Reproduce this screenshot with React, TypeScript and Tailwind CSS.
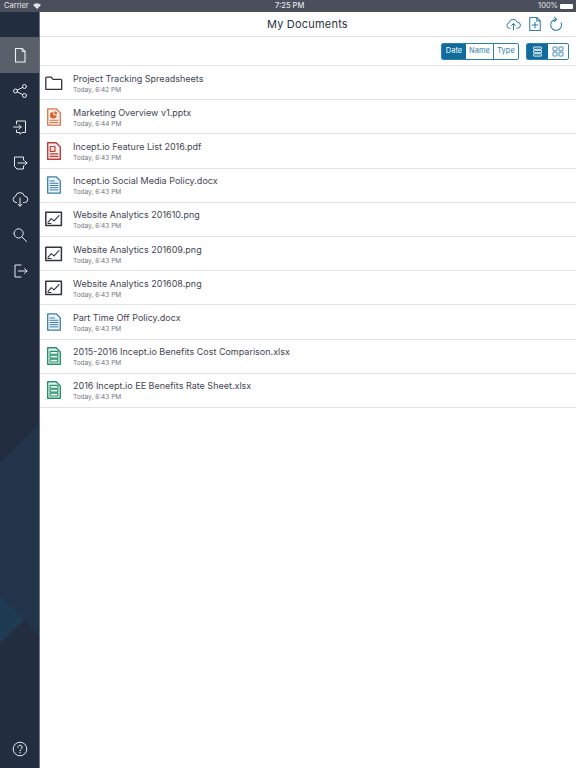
import React from "react";

const S = { fill: "none", stroke: "currentColor", strokeWidth: 1, strokeLinejoin: "round" as const, strokeLinecap: "round" as const };

function Ico({ children, w = 18, h = 18, vb = "0 0 18 18", className = "" }: { children: React.ReactNode; w?: number; h?: number; vb?: string; className?: string }) {
  return (
    <svg width={w} height={h} viewBox={vb} className={className} {...S}>
      {children}
    </svg>
  );
}

const FolderIcon = () => (
  <Ico className="text-[#30343d]">
    <path d="M.8 15.300V4.200a1 1 0 0 1 1-1h4.500l1.700 2.100h7.700a1 1 0 0 1 1 1v9h-15.900z" strokeWidth={1.300} />
  </Ico>
);
const PptIcon = () => (
  <Ico className="text-[#de7448]">
    <path d="M2.700 .8h8.500l4.100 4.100V17.200H2.700z" strokeWidth={1.300} fill="#fbeee8" />
    <path d="M8.300 4a3.300 3.300 0 1 0 3.300 3.300H8.300z" fill="#dd5f2c" stroke="none" />
    <path d="M9.400 3.300a2.800 2.800 0 0 1 2.800 2.900H9.400z" fill="#dd5f2c" stroke="none" />
    <path d="M5 12.300h8M5 14.500h8" strokeWidth={1} />
  </Ico>
);
const PdfIcon = () => (
  <Ico className="text-[#bd3e38]">
    <path d="M2.700 .8h8.500l4.100 4.100V17.200H2.700z" strokeWidth={1.400} fill="#fbeeed" />
    <rect x="5.200" y="4.500" width="4.800" height="4.800" strokeWidth={1.200} />
    <path d="M5 11.800h8M5 14.300h8" strokeWidth={1.200} />
  </Ico>
);
const DocIcon = () => (
  <Ico className="text-[#3b7fa8]">
    <path d="M2.700 .8h8.500l4.100 4.100V17.200H2.700z" strokeWidth={1.300} fill="#eef6fa" />
    <path d="M5 5h4.500M5 7.300h8M5 9.500h8M5 11.700h8M5 13.900h8" strokeWidth={1} />
  </Ico>
);
const ImgIcon = () => (
  <Ico className="text-[#30343d]">
    <rect x=".8" y="2.300" width="15.600" height="13.200" strokeWidth={1.500} />
    <path d="M3 12.300l3.300-3.700 2.700 2.300 5-5.300" strokeWidth={1.100} />
    <path d="M3 13.500h3" strokeWidth={1} />
  </Ico>
);
const XlsIcon = () => (
  <Ico className="text-[#25906a]">
    <path d="M2.700 .8h8.500l4.100 4.100V17.200H2.700z" strokeWidth={1.400} fill="#edf8f3" />
    <rect x="5.100" y="4.400" width="7.800" height="2.800" strokeWidth={1.100} />
    <rect x="5.100" y="8.300" width="7.800" height="2.800" strokeWidth={1.100} />
    <rect x="5.100" y="12.200" width="7.800" height="2.800" strokeWidth={1.100} />
  </Ico>
);

const rows: { name: string; time: string; Icon: () => React.ReactElement }[] = [
  { name: "Project Tracking Spreadsheets", time: "Today, 6:42 PM", Icon: FolderIcon },
  { name: "Marketing Overview v1.pptx", time: "Today, 6:44 PM", Icon: PptIcon },
  { name: "Incept.io Feature List 2016.pdf", time: "Today, 6:43 PM", Icon: PdfIcon },
  { name: "Incept.io Social Media Policy.docx", time: "Today, 6:43 PM", Icon: DocIcon },
  { name: "Website Analytics 201610.png", time: "Today, 6:43 PM", Icon: ImgIcon },
  { name: "Website Analytics 201609.png", time: "Today, 6:43 PM", Icon: ImgIcon },
  { name: "Website Analytics 201608.png", time: "Today, 6:43 PM", Icon: ImgIcon },
  { name: "Part Time Off Policy.docx", time: "Today, 6:43 PM", Icon: DocIcon },
  { name: "2015-2016 Incept.io Benefits Cost Comparison.xlsx", time: "Today, 6:43 PM", Icon: XlsIcon },
  { name: "2016 Incept.io EE Benefits Rate Sheet.xlsx", time: "Today, 6:43 PM", Icon: XlsIcon },
];

const navIcons: React.ReactNode[] = [
  <g key="s">
    <circle cx="4.500" cy="9" r="2" />
    <circle cx="13.500" cy="4.500" r="2" />
    <circle cx="13.500" cy="13.500" r="2" />
    <path d="M6.300 8.100l5.400-2.700M6.300 9.900l5.400 2.700" />
  </g>,
  <path key="i" d="M5.500 6V3h9v11.500h-3.700l-1.800 1.800v-1.800H5.500V12M2.500 9h7.500M8 6.800L10.200 9 8 11.200" />,
  <path key="o" d="M12.500 6V3h-9v9.500l2.500 2.500h6.500V12M7 9h9M13.800 6.800L16 9l-2.200 2.200" />,
  <path key="c" d="M5.500 12.500H5a3.100 3.100 0 0 1-.5-6.100 4.600 4.600 0 0 1 9-.3 3.100 3.100 0 0 1 .2 6.400H12.500M9 8v8.200M7 14.200l2 2 2-2" />,
  <path key="z" d="M3 7.400a4.600 4.600 0 1 0 9.200 0 4.600 4.600 0 1 0-9.200 0M11 11l4.500 4.500" />,
  <path key="l" d="M10 3H4v12h6M7.500 9H16M13.500 6.500L16 9l-2.500 2.500" />,
];

export default function App() {
  return (
    <div className="w-[576px] h-[768px] flex flex-col bg-white overflow-hidden font-['Inter','Liberation_Sans',sans-serif]">
      <div className="relative h-[12px] shrink-0 bg-[#4b4f5b] flex items-center justify-between text-[#e4e5e8] text-[7.500px] pl-1 pr-[3px]">
        <div className="flex items-center gap-1">
          <span>Carrier</span>
          <svg width="8" height="6" viewBox="0 0 8 6" fill="#e4e5e8"><path d="M0 2a5.600 5.600 0 0 1 8 0L4 6z" /></svg>
        </div>
        <span className="font-medium absolute left-[275px]">7:25 PM</span>
        <div className="flex items-center gap-[2px]">
          <span>100%</span>
          <span className="w-[13px] h-[5px] bg-white rounded-[1px]" />
        </div>
      </div>

      <div className="flex flex-1 min-h-0">
        <aside className="relative w-[40px] shrink-0 bg-[#222e3f] border-r border-[#6d7684] flex flex-col overflow-hidden">
          <svg className="absolute inset-0" width="40" height="756" viewBox="0 0 40 756">
            <polygon points="40,411 40,625 24,608 0,631 0,451" fill="#213449" />
            <polygon points="0,585 24,608 0,631" fill="#1f3b53" />
          </svg>
          <div className="relative h-[25px] shrink-0" />
          <div className="relative h-[36px] shrink-0 bg-[#5a6069] flex items-center justify-center text-[#f0f1f3]">
            <Ico>
              <path d="M4.500 2.500h6.500l3 3v10.500h-9.500z" strokeWidth={1.100} />
              <path d="M11 2.500v3h3" strokeWidth={0.800} />
            </Ico>
          </div>
          <div className="relative flex flex-col text-[#e8eaed]">
            {navIcons.map((d, i) => (
              <div key={i} className="h-[36px] flex items-center justify-center">
                <Ico>{d}</Ico>
              </div>
            ))}
          </div>
          <div className="relative mt-auto pb-[11px] flex justify-center text-[#e8eaed]">
            <svg width="16" height="16" viewBox="0 0 16 16" fill="none" stroke="currentColor" strokeWidth="1">
              <circle cx="8" cy="8" r="6.800" />
              <path d="M5.900 6.300a2.100 2.100 0 1 1 3.300 1.700c-.8.500-1.200 1-1.200 1.800" strokeLinecap="round" />
              <circle cx="8" cy="11.700" r=".7" fill="currentColor" stroke="none" />
            </svg>
          </div>
        </aside>

        <main className="flex-1 min-w-0 flex flex-col">
          <header className="h-[25px] shrink-0 border-b border-[#e2e3e5] flex items-center justify-between pl-[227px] pr-[13px]">
            <h1 className="text-[11px] font-normal text-[#2b3240] tracking-[0.2px]">My Documents</h1>
            <div className="flex items-center gap-[7px] text-[#2f7ea8]">
              <Ico w={15} h={15}>
                <path d="M5 13.500H4a3.300 3.300 0 0 1-.4-6.500 5 5 0 0 1 9.700-.8 3.600 3.600 0 0 1 .7 7.300H13M9 8v7.500M6.800 10L9 7.800 11.200 10" strokeWidth={1.200} />
              </Ico>
              <Ico w={14} h={16} vb="0 0 16 18">
                <path d="M2 1.500h8l4 4v11H2z M10 1.500v4h4M8 7v6.500M4.800 10.200h6.400" strokeWidth={1.200} />
              </Ico>
              <Ico w={14} h={16} vb="0 0 16 18">
                <path d="M13.800 7.500A6.200 6.200 0 1 1 8 3.800M6 1l2.700 2.700L6 6.400" strokeWidth={1.200} />
              </Ico>
            </div>
          </header>

          <div className="h-[29px] shrink-0 border-b border-[#e2e3e5] flex items-center justify-end gap-[7px] pr-[7px]">
            <div className="flex h-[17px] rounded-[2px] border border-[#2f7ea8] overflow-hidden text-[7.500px] text-[#2f7ea8]">
              <div className="w-[24px] bg-[#0f6c9c] text-white flex items-center justify-center">Date</div>
              <div className="w-[28px] flex items-center justify-center border-r border-[#2f7ea8]">Name</div>
              <div className="w-[24px] flex items-center justify-center">Type</div>
            </div>
            <div className="flex h-[17px] rounded-[2px] border border-[#2f7ea8] overflow-hidden">
              <div className="w-[21px] bg-[#0f6c9c] text-white flex items-center justify-center">
                <svg width="11" height="11" viewBox="0 0 11 11" fill="none" stroke="currentColor" strokeWidth=".9"><rect x="1.500" y="1" width="8" height="2.300" rx=".5" /><rect x="1.500" y="4.400" width="8" height="2.300" rx=".5" /><rect x="1.500" y="7.800" width="8" height="2.300" rx=".5" /></svg>
              </div>
              <div className="w-[20px] text-[#2f7ea8] flex items-center justify-center">
                <svg width="12" height="11" viewBox="0 0 12 11" fill="none" stroke="currentColor" strokeWidth=".9"><rect x="1" y="1" width="4" height="3.800" rx=".5" /><rect x="7" y="1" width="4" height="3.800" rx=".5" /><rect x="1" y="6.200" width="4" height="3.800" rx=".5" /><rect x="7" y="6.200" width="4" height="3.800" rx=".5" /></svg>
              </div>
            </div>
          </div>

          <ul>
            {rows.map((r) => (
              <li key={r.name} className="h-[34.200px] border-b border-[#e2e3e5] flex items-center">
                <div className="w-[33px] shrink-0 pl-[5px]">
                  <r.Icon />
                </div>
                <div className="min-w-0 pt-[1px]">
                  <div className="text-[9px] leading-[13px] text-[#3f4652] whitespace-nowrap">{r.name}</div>
                  <div className="text-[6.500px] leading-[10px] text-[#70757d]">{r.time}</div>
                </div>
              </li>
            ))}
          </ul>
        </main>
      </div>
    </div>
  );
}
